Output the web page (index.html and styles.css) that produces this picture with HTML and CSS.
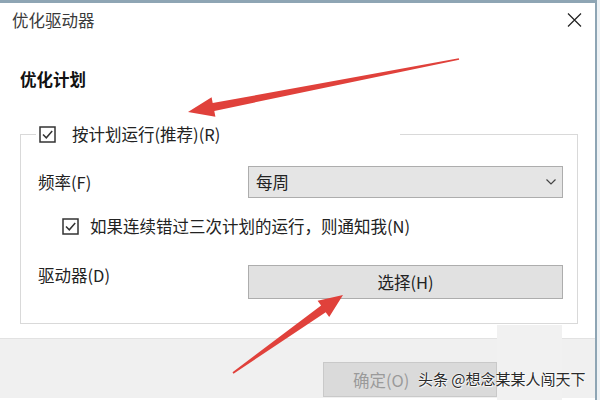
FILE: index.html
```html
<!DOCTYPE html>
<html lang="zh-CN">
<head>
    <meta charset="UTF-8" />
    <title>优化驱动器</title>
    <link rel="stylesheet" href="styles.css">
</head>
<body>
<div class="window">
    <div class="titlebar">
        <span class="title">优化驱动器</span>
        <span class="close">
            <svg width="15" height="14" viewBox="0 0 15 14"><path d="M1 0.5 L14 13.5 M14 0.5 L1 13.5" stroke="#222" stroke-width="1.2" fill="none"/></svg>
        </span>
    </div>

    <div class="content">
        <h2 class="section-title">优化计划</h2>
        <fieldset class="group">
            <legend>
                <span class="check">
                    <svg width="17" height="17" viewBox="0 0 17 17"><rect x="1" y="1" width="15" height="15" stroke="#333" stroke-width="1.5" fill="#fff"/><path d="M4 8.5 L7.3 11.8 L13.2 5" stroke="#333" stroke-width="1.5" fill="none"/></svg>
                </span>
                按计划运行(推荐)(R)
            </legend>

            <div class="row row-freq">
                <span class="label">频率(F)</span>
                <div class="select">
                    <span>每周</span>
                    <svg width="10" height="6" viewBox="0 0 10 6"><path d="M0.5 0.5 L5 5 L9.5 0.5" stroke="#444" stroke-width="1.2" fill="none"/></svg>
                </div>
            </div>

            <div class="row row-check">
                <span class="check">
                    <svg width="17" height="17" viewBox="0 0 17 17"><rect x="1" y="1" width="15" height="15" stroke="#333" stroke-width="1.5" fill="#fff"/><path d="M4 8.5 L7.3 11.8 L13.2 5" stroke="#333" stroke-width="1.5" fill="none"/></svg>
                </span>
                如果连续错过三次计划的运行，则通知我(N)
            </div>

            <div class="row row-drive">
                <span class="label">驱动器(D)</span>
                <button class="btn">选择(H)</button>
            </div>
        </fieldset>
    </div>

    <div class="footer">
        <button class="btn btn-ok" disabled>确定(O)</button>
    </div>
</div>

<!-- 水印和标注箭头 -->
<div class="blot"></div>
<div class="watermark">头条 @想念某某人闯天下</div>
<svg class="arrows" width="600" height="400" viewBox="0 0 600 400">
    <polygon points="458.8,58.2 212.7,103.1 211.6,97.2 188,112 215.4,116.8 214.3,110.9 459.2,59.8" fill="#e0413b"/>
    <polygon points="232.5,372.3 321.1,305.6 317.6,300.7 343,295 329.2,317.1 325.7,312.2 233.5,373.7" fill="#e0413b"/>
</svg>
</body>
</html>
```

FILE: styles.css
```css
* {
    box-sizing: border-box;
}
body {
    margin: 0;
    width: 600px;
    height: 400px;
    overflow: hidden;
    position: relative;
    background-color: #eef2f5;
    font-family: "Noto Sans CJK SC", sans-serif;
    font-size: 16.5px;
    color: #222;
}
.window {
    width: 597px;
    height: 400px;
    background-color: #fff;
    border-top: 3px solid #8ea5b4;
    border-right: 2px solid #8ea5b4;
}
.titlebar {
    display: flex;
    align-items: center;
    justify-content: space-between;
    height: 34px;
    padding: 0 13px 0 12px;
}
.title {
    color: #3a3a3a;
    line-height: 34px;
}
.close {
    display: flex;
}
.content {
    padding-left: 20px;
}
.section-title {
    margin: 30px 0 0;
    font-size: 16.5px;
    line-height: 24px;
    font-weight: bold;
    color: #111;
}
.group {
    margin: 30px 0 0;
    width: 558px;
    min-width: 0;
    border: 1px solid #d9d9d9;
    padding: 0 14px 24px 17px;
}
.group legend {
    display: flex;
    align-items: center;
    width: 364px;
    height: 26px;
    margin-left: -2px;
    padding: 0 0 0 3px;
}
.check {
    display: flex;
    margin-right: 16px;
}
.row {
    display: flex;
    align-items: center;
}
.label {
    width: 210px;
    flex: none;
}
.row-freq {
    margin-top: 19px;
    height: 32px;
}
.select {
    flex: 1;
    height: 32px;
    display: flex;
    align-items: center;
    justify-content: space-between;
    padding: 0 6px 0 7px;
    background-color: #e5e5e5;
    border: 1px solid #adadad;
}
.row-check {
    margin-top: 16px;
    height: 24px;
    padding-left: 24px;
}
.row-check .check {
    margin-right: 11px;
}
.row-drive {
    margin-top: 27px;
    align-items: flex-start;
}
.row-drive .label {
    line-height: 20px;
}
.btn {
    flex: 1;
    height: 34px;
    font: inherit;
    color: #222;
    background-color: #e1e1e1;
    border: 1px solid #adadad;
}
.footer {
    margin-top: 14px;
    height: 60px;
    padding: 23px 0 0 323px;
    background-color: #f0f0f0;
    border-top: 1px solid #e2e2e2;
}
.btn-ok {
    width: 174px;
    height: 35px;
    text-align: left;
    padding-left: 29px;
    color: #9a9a9a;
    background-color: #dadada;
    border-color: #c9c9c9;
}
.blot {
    position: absolute;
    left: 497px;
    top: 325px;
    width: 65px;
    height: 75px;
    background-color: #f1f1f1;
}
.watermark {
    position: absolute;
    left: 418px;
    top: 369px;
    font-size: 15px;
    line-height: 20px;
    color: #2a2a2a;
    text-shadow: 0 0 1px #fff, 0 0 2px #fff, 1px 1px 1px #fff;
}
.arrows {
    position: absolute;
    left: 0;
    top: 0;
}
```
